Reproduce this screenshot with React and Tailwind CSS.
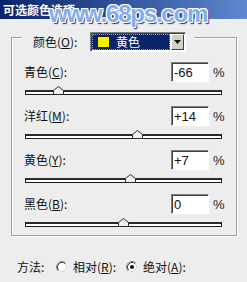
import React from "react";

const rows = [
  { label: "青色", hot: "C", text: "-66", value: -66 },
  { label: "洋红", hot: "M", text: "+14", value: 14 },
  { label: "黄色", hot: "Y", text: "+7", value: 7 },
  { label: "黑色", hot: "B", text: "0", value: 0 },
];

const cjk = "font-['Noto_Sans_CJK_SC',sans-serif]";
const latin = "font-['Liberation_Sans',Arial,sans-serif]";

function Label({ name, hot }) {
  return (
    <span className={`${cjk} text-[12px] leading-none text-[#111]`}>
      {name}(<span className="underline underline-offset-1">{hot}</span>):
    </span>
  );
}

function Radio({ checked }) {
  return (
    <svg width="12" height="12" viewBox="0 0 12 12" className="shrink-0">
      <circle cx="6" cy="6" r="5" fill="#fff" />
      <path d="M2.11 9.89 A5.5 5.5 0 0 1 9.89 2.11" fill="none" stroke="#808080" />
      <path d="M9.89 2.11 A5.5 5.5 0 0 1 2.11 9.89" fill="none" stroke="#f4f4f4" />
      <path d="M2.82 9.18 A4.5 4.5 0 0 1 9.18 2.82" fill="none" stroke="#404040" />
      <path d="M9.18 2.82 A4.5 4.5 0 0 1 2.82 9.18" fill="none" stroke="#d4d0c8" />
      {checked && <circle cx="6" cy="6" r="2" fill="#111" />}
    </svg>
  );
}

function Slider({ value }) {
  // track runs x 25..222, zero sits at 123.5
  const center = 123.5 + value * 0.985;
  return (
    <div className="h-[20px] flex items-center pl-[13px]">
      <div className="relative w-[197px] h-[5px] border border-[#1c1c1c] border-t-2 border-t-[#2a2a2a] bg-white">
        <svg
          width="11"
          height="9"
          viewBox="0 0 11 9"
          className="absolute bottom-[-1px]"
          style={{ left: center - 5.5 - 26 }}
        >
          <path d="M0.5 8.5 L0.5 4.5 L5.5 0.5 L10.5 4.5 L10.5 8.5 Z" fill="#f2f2f2" stroke="#2b2b2b" />
        </svg>
      </div>
    </div>
  );
}

export default function App() {
  return (
    <div className={`relative w-[247px] h-[282px] overflow-hidden bg-[#ededed] ${latin}`}>
      <div className="h-[19px] bg-linear-to-r from-[#0a246a] to-[#5f88cf] flex items-center pl-[3px]">
        <span className={`${cjk} text-[12px] font-bold text-white leading-none`}>可选颜色选项</span>
      </div>
      {/* site watermark stamped over the title bar */}
      <span className="absolute left-[49px] top-[2px] text-[24px] font-bold tracking-[-1.2px] text-[#86acea] leading-none [text-shadow:1px_1px_0_#fff,-1px_-1px_0_#fff,1px_-1px_0_#fff,-1px_1px_0_#fff,2px_2px_1px_#1d3a7a]">
        www.68ps.com
      </span>

      <div className="ml-[11px] mt-[18px] w-[226px] h-[199px] border border-[#a0a0a0] shadow-[inset_1px_1px_0_#fff,1px_1px_0_#fff] flex flex-col">
        <div className="-mt-[6px] ml-[10px] w-fit bg-[#ededed] flex items-center pl-[11px] pr-[8px] h-[20px]">
          <span className="w-[57px]">
            <Label name="颜色" hot="O" />
          </span>
          <div className="w-[96px] h-[20px] flex p-[1px] bg-white border border-t-[#808080] border-l-[#808080] border-b-white border-r-white shadow-[inset_1px_1px_0_#404040]">
            <div className="flex-1 flex items-center bg-[#0a246a] border border-dotted border-[#8f9cc0] pl-[4px]">
              <span className="w-[13px] h-[12px] bg-[#f7f000] border border-[#222]" />
              <span className={`${cjk} ml-[6px] text-[12px] leading-none text-white`}>黄色</span>
            </div>
            <div className="w-[13px] ml-[1px] flex items-center justify-center bg-[#d4d0c8] border border-t-white border-l-white border-b-[#404040] border-r-[#404040]">
              <svg width="7" height="4" viewBox="0 0 7 4">
                <path d="M0 0 H7 L3.5 4 Z" fill="#111" />
              </svg>
            </div>
          </div>
        </div>

        <div className="mt-[10px] flex flex-col gap-[4px]">
          {rows.map((r) => (
            <div key={r.hot}>
              <div className="h-[20px] flex items-center pl-[12px]">
                <div className="flex-1">
                  <Label name={r.label} hot={r.hot} />
                </div>
                <div className="w-[38px] h-[20px] flex items-center pl-[2px] bg-white border border-t-[#808080] border-l-[#808080] border-b-white border-r-white shadow-[inset_1px_1px_0_#404040] text-[13px] text-[#111] leading-none">
                  {r.text}
                </div>
                <span className="w-[27px] pl-[4px] text-[13px] text-[#222] leading-none">%</span>
              </div>
              <Slider value={r.value} />
            </div>
          ))}
        </div>
      </div>

      <div className="mt-[23px] h-[16px] flex items-center pl-[17px]">
        <span className={`${cjk} text-[12px] leading-none text-[#111] w-[39px]`}>方法:</span>
        <Radio />
        <span className="ml-[5px] w-[53px]">
          <Label name="相对" hot="R" />
        </span>
        <Radio checked />
        <span className="ml-[5px]">
          <Label name="绝对" hot="A" />
        </span>
      </div>
    </div>
  );
}
